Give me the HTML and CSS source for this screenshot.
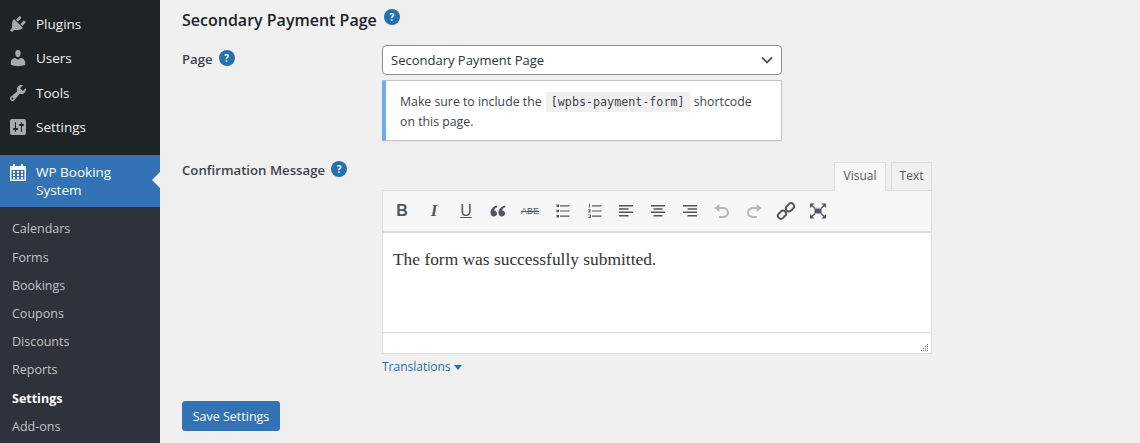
FILE: index.html
```html
<!DOCTYPE html>
<html lang="en">
<head>
  <meta charset="UTF-8">
  <title>WP Booking System Settings</title>
  <link rel="stylesheet" href="styles.css">
</head>
<body>
  <div class="sidebar">
    <ul class="menu">
      <li class="menu-item">
        <svg class="menu-icon" viewBox="0 0 20 20"><path d="M13.11 4.36L9.87 7.6 8 5.73l3.24-3.24c.35-.34 1.05-.2 1.56.32.52.51.66 1.21.31 1.55zm-8 1.77l.91-1.12 9.01 9.01-1.19.84c-.71.71-2.63 1.16-3.82 1.16H6.14L4.9 17.26c-.59.59-1.54.59-2.12 0-.59-.58-.59-1.53 0-2.12l1.24-1.24v-3.88c0-1.13.4-3.19 1.09-3.89zm7.26 3.97l3.24-3.24c.34-.35 1.04-.21 1.55.31.52.51.66 1.21.31 1.55l-3.24 3.25z"/></svg>
        Plugins
      </li>
      <li class="menu-item">
        <svg class="menu-icon" viewBox="0 0 20 20"><path d="M10 9.25c-2.27 0-2.73-3.44-2.73-3.44C7 4.02 7.82 2 9.97 2c2.16 0 2.98 2.02 2.71 3.81 0 0-.41 3.44-2.68 3.44zm0 2.57L12.72 10c2.39 0 4.52 2.33 4.52 4.53v2.49s-3.65 1.13-7.24 1.13c-3.65 0-7.24-1.13-7.24-1.13v-2.49c0-2.25 1.94-4.48 4.47-4.48z"/></svg>
        Users
      </li>
      <li class="menu-item">
        <svg class="menu-icon" viewBox="0 0 20 20"><path d="M16.68 9.77c-1.34 1.34-3.3 1.67-4.95.99l-5.41 6.52c-.99.99-2.59.99-3.58 0s-.99-2.59 0-3.57l6.52-5.42c-.68-1.65-.35-3.61.99-4.95 1.28-1.28 3.12-1.62 4.72-1.06l-2.89 2.89 2.82 2.82 2.86-2.87c.53 1.58.18 3.39-1.08 4.65zM3.81 16.21c.4.39 1.04.39 1.43 0 .4-.4.4-1.04 0-1.43-.39-.4-1.03-.4-1.43 0-.39.39-.39 1.03 0 1.43z"/></svg>
        Tools
      </li>
      <li class="menu-item">
        <svg class="menu-icon" viewBox="0 0 20 20"><path d="M18 16V4c0-1.1-.9-2-2-2H4c-1.1 0-2 .9-2 2v12c0 1.1.9 2 2 2h12c1.1 0 2-.9 2-2zM8 11h1c.55 0 1 .45 1 1s-.45 1-1 1H8v1.5c0 .28-.22.5-.5.5s-.5-.22-.5-.5V13H6c-.55 0-1-.45-1-1s.45-1 1-1h1V5.5c0-.28.22-.5.5-.5s.5.22.5.5V11zm5-2h-1c-.55 0-1-.45-1-1s.45-1 1-1h1V5.5c0-.28.22-.5.5-.5s.5.22.5.5V7h1c.55 0 1 .45 1 1s-.45 1-1 1h-1v5.5c0 .28-.22.5-.5.5s-.5-.22-.5-.5V9z"/></svg>
        Settings
      </li>
      <li class="menu-item active">
        <svg class="menu-icon" viewBox="0 0 20 20"><path d="M5 1h2v2h6V1h2v2h3v15H2V3h3zM3.5 7v9.5h13V7z" fill-rule="evenodd"/><path d="M5 8h2v2H5zM9 8h2v2H9zM13 8h2v2h-2zM5 11h2v2H5zM9 11h2v2H9zM13 11h2v2h-2zM5 14h2v2H5zM9 14h2v2H9zM13 14h2v2h-2z"/></svg>
        <span class="menu-label">WP Booking<br>System</span>
      </li>
    </ul>
    <ul class="submenu">
      <li>Calendars</li>
      <li>Forms</li>
      <li>Bookings</li>
      <li>Coupons</li>
      <li>Discounts</li>
      <li>Reports</li>
      <li class="current">Settings</li>
      <li>Add-ons</li>
    </ul>
  </div>

  <div class="content">
    <h2 class="section-title">Secondary Payment Page <span class="help">?</span></h2>

    <div class="field field-page">
      <div class="field-label">Page <span class="help">?</span></div>
      <div class="field-body">
        <div class="select">
          Secondary Payment Page
          <svg class="select-arrow" viewBox="0 0 12 8"><path d="M1 1.5l5 5 5-5" fill="none" stroke="#50575e" stroke-width="1.8"/></svg>
        </div>
        <div class="notice">
          <p>Make sure to include the <code>[wpbs-payment-form]</code> shortcode<br>on this page.</p>
        </div>
      </div>
    </div>

    <div class="field field-message">
      <div class="field-label">Confirmation Message <span class="help">?</span></div>
      <div class="field-body">
        <div class="tabs">
          <div class="tab tab-on">Visual</div>
          <div class="tab">Text</div>
        </div>
        <div class="editor">
          <div class="toolbar">
            <span class="tool tool-b">B</span>
            <span class="tool tool-i">I</span>
            <span class="tool tool-u">U</span>
            <span class="tool"><svg viewBox="0 0 20 20"><path d="M9.500 4.500C5.500 5 2.500 8 2.500 11.500c0 2.500 1.500 4 3.300 4s3.200-1.300 3.200-3-1.300-3-2.800-3c0-1.500 1.300-2.800 2.800-3zM17.500 4.500c-4 .5-7 3.500-7 7 0 2.500 1.500 4 3.300 4s3.200-1.300 3.200-3-1.300-3-2.800-3c0-1.500 1.300-2.800 2.800-3z"/></svg></span>
            <span class="tool tool-abe">ABE</span>
            <span class="tool"><svg viewBox="0 0 20 20"><path d="M4.500 3.500H7V6H4.500zM4.500 8.800H7v2.500H4.500zM4.500 14H7v2.500H4.500zM8 4.200h9.500v1.200H8zM8 9.400h9.500v1.200H8zM8 14.600h9.500v1.200H8z"/></svg></span>
            <span class="tool"><svg viewBox="0 0 20 20"><path d="M8 4.200h9.500v1.200H8zM8 9.400h9.500v1.200H8zM8 14.600h9.500v1.200H8zM5 2.800h1v3.700H5zM4.300 8.300h2.500v.9L5.500 10.600h1.300v.8H4.300v-.8L5.700 9.100H4.300zM4.300 13.500h2.500v3.500H4.300v-.8h1.600v-.6h-1v-.7h1v-.6H4.300z"/></svg></span>
            <span class="tool"><svg viewBox="0 0 20 20"><path d="M3 4h14v1.500H3zM3 7.300h9.500v1.500H3zM3 10.600h14v1.500H3zM3 14h9.500v1.500H3z"/></svg></span>
            <span class="tool"><svg viewBox="0 0 20 20"><path d="M3 4h14v1.500H3zM5.500 7.300h9v1.500h-9zM3 10.600h14v1.500H3zM5.500 14h9v1.500h-9z"/></svg></span>
            <span class="tool"><svg viewBox="0 0 20 20"><path d="M3 4h14v1.500H3zM7.500 7.300H17v1.500H7.500zM3 10.600h14v1.500H3zM7.500 14H17v1.500H7.500z"/></svg></span>
            <span class="tool tool-off"><svg viewBox="0 0 20 20"><path d="M7.500 3v3H11c3.300 0 6 2.400 6 5.500S14.300 17 11 17H7v-2h4c2.200 0 4-1.500 4-3.500S13.200 8 11 8H7.500v3L2.500 7z"/></svg></span>
            <span class="tool tool-off"><svg viewBox="0 0 20 20"><path d="M12.500 3v3H9c-3.300 0-6 2.400-6 5.500S5.700 17 9 17h4v-2H9c-2.200 0-4-1.500-4-3.500S6.800 8 9 8h3.500v3l5-4z"/></svg></span>
            <span class="tool"><svg viewBox="0 0 20 20"><g fill="none" stroke="#50575e" stroke-width="2"><rect x="9.500" y="3.300" width="9" height="6" rx="3" transform="rotate(-45 14 6.300)"/><rect x="1.500" y="10.700" width="9" height="6" rx="3" transform="rotate(-45 6 13.700)"/></g></svg></span>
            <span class="tool"><svg viewBox="0 0 20 20"><path d="M6.500 7.500h7v5h-7z"/><path d="M2 2.500h4.500L2 7zM18 2.500h-4.500L18 7zM2 17.500h4.500L2 13zM18 17.500h-4.500L18 13z"/><path d="M4 4.500l3 3M16 4.500l-3 3M4 15.500l3-3M16 15.500l-3-3" fill="none" stroke="#50575e" stroke-width="1.400"/></svg></span>
          </div>
          <div class="editor-body">The form was successfully submitted.</div>
          <div class="statusbar">
            <svg class="resize" viewBox="0 0 10 10"><path d="M8 1h1v1H8zM6 3h1v1H6zM8 3h1v1H8zM4 5h1v1H4zM6 5h1v1H6zM8 5h1v1H8zM2 7h1v1H2zM4 7h1v1H4zM6 7h1v1H6zM8 7h1v1H8z"/></svg>
          </div>
        </div>
        <div class="translations">Translations <span class="caret"></span></div>
      </div>
    </div>

    <button class="button">Save Settings</button>
  </div>
</body>
</html>
```

FILE: styles.css
```css
body {
  margin: 0;
  height: 443px;
  overflow: hidden;
  display: flex;
  background-color: #f0f0f1;
  font-family: "Open Sans", "Noto Sans", sans-serif;
  font-size: 13px;
  color: #3c434a;
}
ul {
  list-style: none;
  margin: 0;
  padding: 0;
}
.sidebar {
  width: 160px;
  flex: none;
  background-color: #2d323b;
  color: #f0f0f1;
}
.menu {
  background-color: #1d2327;
  padding-top: 7px;
}
.menu-item {
  display: flex;
  align-items: center;
  gap: 8px;
  height: 34.3px;
  padding-left: 8px;
  box-sizing: border-box;
  font-size: 13.5px;
}
.menu-item:nth-child(4) {
  margin-bottom: 10.8px;
}
.menu-icon {
  width: 20px;
  height: 20px;
  flex: none;
  fill: #a7aaad;
}
.menu-item.active {
  position: relative;
  height: 52px;
  align-items: flex-start;
  padding-top: 8px;
  background-color: #3373b5;
  color: #fff;
  line-height: 18px;
}
.menu-label {
  width: 100px;
}
.menu-item.active .menu-icon {
  fill: #fff;
}
.menu-item.active::after {
  content: "";
  position: absolute;
  right: 0;
  top: 17px;
  border: 8px solid transparent;
  border-right-color: #f0f0f1;
}
.submenu {
  padding-top: 8.4px;
  font-size: 12.5px;
  color: #c3c4c7;
}
.submenu li {
  height: 28.2px;
  line-height: 28px;
  padding-left: 12px;
}
.submenu .current {
  color: #fff;
  font-weight: 700;
}

.content {
  flex: 1;
  padding: 8px 0 0 22px;
}
.section-title {
  margin: 0;
  height: 24px;
  display: flex;
  align-items: center;
  gap: 7px;
  font-size: 16px;
  font-weight: 600;
  color: #1d2327;
}
.section-title .help {
  margin-bottom: 6px;
}
.help {
  display: inline-block;
  width: 16px;
  height: 16px;
  line-height: 16px;
  border-radius: 50%;
  background-color: #2271b1;
  color: #fff;
  font-size: 10px;
  font-weight: 700;
  text-align: center;
  flex: none;
}
.field {
  display: flex;
}
.field-page {
  margin-top: 13px;
}
.field-message {
  margin-top: 21px;
}
.field-label {
  width: 200px;
  flex: none;
  font-weight: 600;
  font-size: 13.2px;
  line-height: 18px;
  display: flex;
  align-items: flex-start;
  gap: 6px;
}
.field-page .field-label {
  padding-top: 5px;
}
.field-message .field-label {
  margin-top: -1px;
}
.field-body {
  width: 550px;
}
.select {
  width: 400px;
  height: 30px;
  box-sizing: border-box;
  display: flex;
  align-items: center;
  justify-content: space-between;
  padding: 0 8px;
  background-color: #fff;
  border: 1px solid #8c8f94;
  border-radius: 4px;
  font-size: 13px;
  color: #2c3338;
}
.select-arrow {
  width: 12px;
  height: 8px;
}
.notice {
  width: 400px;
  height: 61px;
  box-sizing: border-box;
  margin-top: 5px;
  padding: 11px 12px 0 14px;
  background-color: #fff;
  border: 1px solid #c3c4c7;
  border-left: 4px solid #72aee6;
  box-shadow: 0 1px 1px rgba(0, 0, 0, 0.04);
}
.notice p {
  margin: 0;
  font-size: 12.3px;
  line-height: 20px;
}
code {
  background-color: #f0f0f1;
  padding: 3px 5px;
  margin: 0 1px;
  font-family: "DejaVu Sans Mono", monospace;
  font-size: 11.7px;
  line-height: 1;
}

.tabs {
  display: flex;
  justify-content: flex-end;
  gap: 5px;
  height: 28px;
  width: 550px;
}
.tab {
  box-sizing: border-box;
  width: 41px;
  height: 28px;
  text-align: center;
  line-height: 26px;
  font-size: 12px;
  color: #50575e;
  background-color: #f0f0f1;
  border: 1px solid #dcdcde;
  border-bottom: 0;
}
.tab-on {
  width: 52px;
  height: 29px;
  position: relative;
  z-index: 1;
  background-color: #f6f7f7;
}
.editor {
  width: 550px;
  box-sizing: border-box;
  border: 1px solid #dcdcde;
  background-color: #fff;
}
.toolbar {
  height: 42px;
  box-sizing: border-box;
  display: flex;
  align-items: center;
  padding-left: 3px;
  background-color: #f6f7f7;
  border-bottom: 2px solid #dcdcde;
}
.tool {
  width: 32px;
  height: 20px;
  flex: none;
  display: flex;
  align-items: center;
  justify-content: center;
  font-family: "Liberation Sans", sans-serif;
  font-size: 16px;
  line-height: 20px;
  color: #50575e;
}
.tool svg {
  width: 20px;
  height: 20px;
  fill: #50575e;
}
.tool-b {
  font-weight: 700;
}
.tool-i {
  font-family: "Liberation Serif", serif;
  font-style: italic;
  font-weight: 700;
  font-size: 17px;
}
.tool-u {
  text-decoration: underline;
}
.tool-abe {
  font-size: 9px;
  text-decoration: line-through;
}
.tool-off svg {
  fill: #b4b9be;
}
.editor-body {
  height: 99px;
  box-sizing: border-box;
  padding: 16px 10px 0;
  font-family: "Liberation Serif", serif;
  font-size: 17.4px;
  line-height: 21px;
  color: #333;
}
.statusbar {
  height: 21px;
  box-sizing: border-box;
  border-top: 1px solid #dcdcde;
  display: flex;
  justify-content: flex-end;
  align-items: flex-end;
}
.resize {
  width: 10px;
  height: 10px;
  margin: 0 2px 0 0;
  fill: #72777c;
}
.translations {
  margin-top: 4px;
  height: 18px;
  line-height: 18px;
  font-size: 12px;
  color: #2271b1;
}
.caret {
  display: inline-block;
  border: 4px solid transparent;
  border-top: 5px solid #2271b1;
  border-bottom: 0;
  vertical-align: middle;
}
.button {
  margin-top: 25px;
  width: 98px;
  height: 30px;
  padding: 0;
  background-color: #3373b5;
  color: #fff;
  border: 1px solid #3373b5;
  border-radius: 3px;
  font-family: inherit;
  font-size: 12.5px;
}
```
